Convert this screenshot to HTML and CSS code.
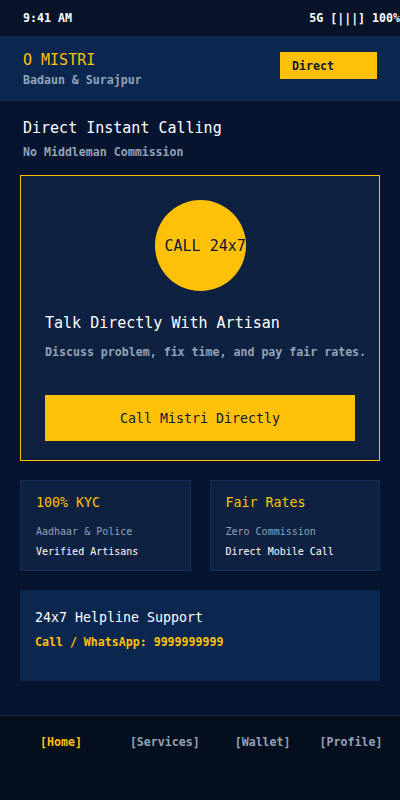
FILE: index.html
```html
<!doctype html>
<html lang="en">
    <head>
        <meta charset="UTF-8" />
        <meta name="viewport" content="width=device-width, initial-scale=1.0" />
        <title>O Mistri - Home</title>
        <link rel="stylesheet" href="styles.css">
    </head>

    <body>
        <div id="app">
            <div class="status">
                <span>9:41 AM</span>
                <span>5G [|||] 100%</span>
            </div>

            <div class="topbar">
                <div>
                    <div class="brand">O MISTRI</div>
                    <div class="place">Badaun &amp; Surajpur</div>
                </div>
                <button class="tagbtn">Direct</button>
            </div>

            <div id="main">
                <h2 class="title">Direct Instant Calling</h2>
                <p class="sub">No Middleman Commission</p>

                <div class="callcard">
                    <div class="circle">CALL 24x7</div>
                    <h3 class="cardhead">Talk Directly With Artisan</h3>
                    <p class="carddesc">Discuss problem, fix time, and pay fair rates.</p>
                    <button class="callbtn">Call Mistri Directly</button>
                </div>

                <div class="grid">
                    <div class="mini">
                        <div class="minihead">100% KYC</div>
                        <div class="minigray">Aadhaar &amp; Police</div>
                        <div class="miniwhite">Verified Artisans</div>
                    </div>
                    <div class="mini">
                        <div class="minihead">Fair Rates</div>
                        <div class="minigray">Zero Commission</div>
                        <div class="miniwhite">Direct Mobile Call</div>
                    </div>
                </div>

                <div class="help">
                    <div class="helphead">24x7 Helpline Support</div>
                    <div class="helpnum">Call / WhatsApp: 9999999999</div>
                </div>
            </div>

            <div class="nav">
                <span class="navitem active">[Home]</span>
                <span class="navitem services">[Services]</span>
                <span class="navitem wallet">[Wallet]</span>
                <span class="navitem profile">[Profile]</span>
            </div>
        </div>
    </body>
</html>
```

FILE: styles.css
```css
body {
    margin: 0;
    font-family: "DejaVu Sans Mono", "Liberation Mono", monospace;
    background: #061430;
    color: white;
}

#app {
    height: 800px;
    display: flex;
    flex-direction: column;
    overflow: hidden;
}

.status {
    height: 36px;
    display: flex;
    justify-content: space-between;
    align-items: center;
    padding: 0 0 0 23px;
    background: #061328;
    font-size: 11.6px;
    font-weight: bold;
    white-space: nowrap;
}

.topbar {
    height: 65px;
    box-sizing: border-box;
    display: flex;
    justify-content: space-between;
    align-items: flex-start;
    padding: 15px 23px 0;
    background: #0b2750;
}

.brand {
    color: #ffc107;
    font-size: 15px;
    line-height: 18px;
}

.place {
    margin-top: 4px;
    color: #94a3b8;
    font-size: 11.6px;
    line-height: 14px;
    font-weight: bold;
}

.tagbtn {
    width: 97px;
    height: 27px;
    margin-top: 1px;
    border: none;
    background: #ffc107;
    color: #0b1a33;
    font-family: inherit;
    font-size: 11.6px;
    font-weight: bold;
    text-align: left;
    padding: 0 0 0 12px;
}

#main {
    flex: 1;
    padding: 0 20px;
}

.title {
    margin: 18px 0 0 3px;
    font-size: 15px;
    line-height: 18px;
    font-weight: normal;
}

.sub {
    margin: 8px 0 0 3px;
    color: #94a3b8;
    font-size: 11.6px;
    line-height: 14px;
    font-weight: bold;
}

.callcard {
    margin-top: 16px;
    border: solid 1px #ffc107;
    background: #0f2141;
    padding: 24px 24px 19px;
}

.circle {
    width: 91px;
    height: 91px;
    margin: 0 auto;
    border-radius: 50%;
    background: #ffc107;
    color: #0b1a33;
    font-size: 15px;
    display: flex;
    align-items: center;
    padding-left: 10px;
    box-sizing: border-box;
    white-space: nowrap;
}

.cardhead {
    margin: 23px 0 0;
    font-size: 15px;
    line-height: 18px;
    font-weight: normal;
}

.carddesc {
    margin: 13px 0 0;
    color: #94a3b8;
    font-size: 11.6px;
    line-height: 14px;
    font-weight: bold;
    white-space: nowrap;
}

.callbtn {
    display: block;
    width: 100%;
    height: 46px;
    margin-top: 36px;
    border: none;
    background: #ffc107;
    color: #0b1a33;
    font-family: inherit;
    font-size: 13.3px;
}

.grid {
    margin-top: 19px;
    display: grid;
    grid-template-columns: 1fr 1fr;
    gap: 19px;
}

.mini {
    height: 91px;
    box-sizing: border-box;
    border: solid 1px #12305a;
    background: #0f2141;
    padding: 14px 15px;
}

.minihead {
    color: #ffc107;
    font-size: 13.3px;
    line-height: 16px;
}

.minigray {
    margin-top: 15px;
    color: #94a3b8;
    font-size: 10px;
    line-height: 12px;
}

.miniwhite {
    margin-top: 8px;
    font-size: 10px;
    line-height: 12px;
}

.help {
    margin-top: 19px;
    height: 91px;
    box-sizing: border-box;
    background: #0b2750;
    padding: 20px 15px;
}

.helphead {
    font-size: 13.3px;
    line-height: 16px;
}

.helpnum {
    margin-top: 9px;
    color: #ffc107;
    font-size: 11.6px;
    line-height: 14px;
    font-weight: bold;
}

.nav {
    height: 85px;
    border-top: solid 1px #1e2d45;
    background: #040e1d;
    display: flex;
    align-items: flex-start;
    padding: 19px 0 0 40px;
    box-sizing: border-box;
    white-space: nowrap;
}

.navitem {
    color: #94a3b8;
    font-size: 11.6px;
    line-height: 14px;
    font-weight: bold;
}

.services {
    margin-left: 48px;
}

.wallet {
    margin-left: 35px;
}

.profile {
    margin-left: 29px;
}

.active {
    color: #ffc107;
}
```
